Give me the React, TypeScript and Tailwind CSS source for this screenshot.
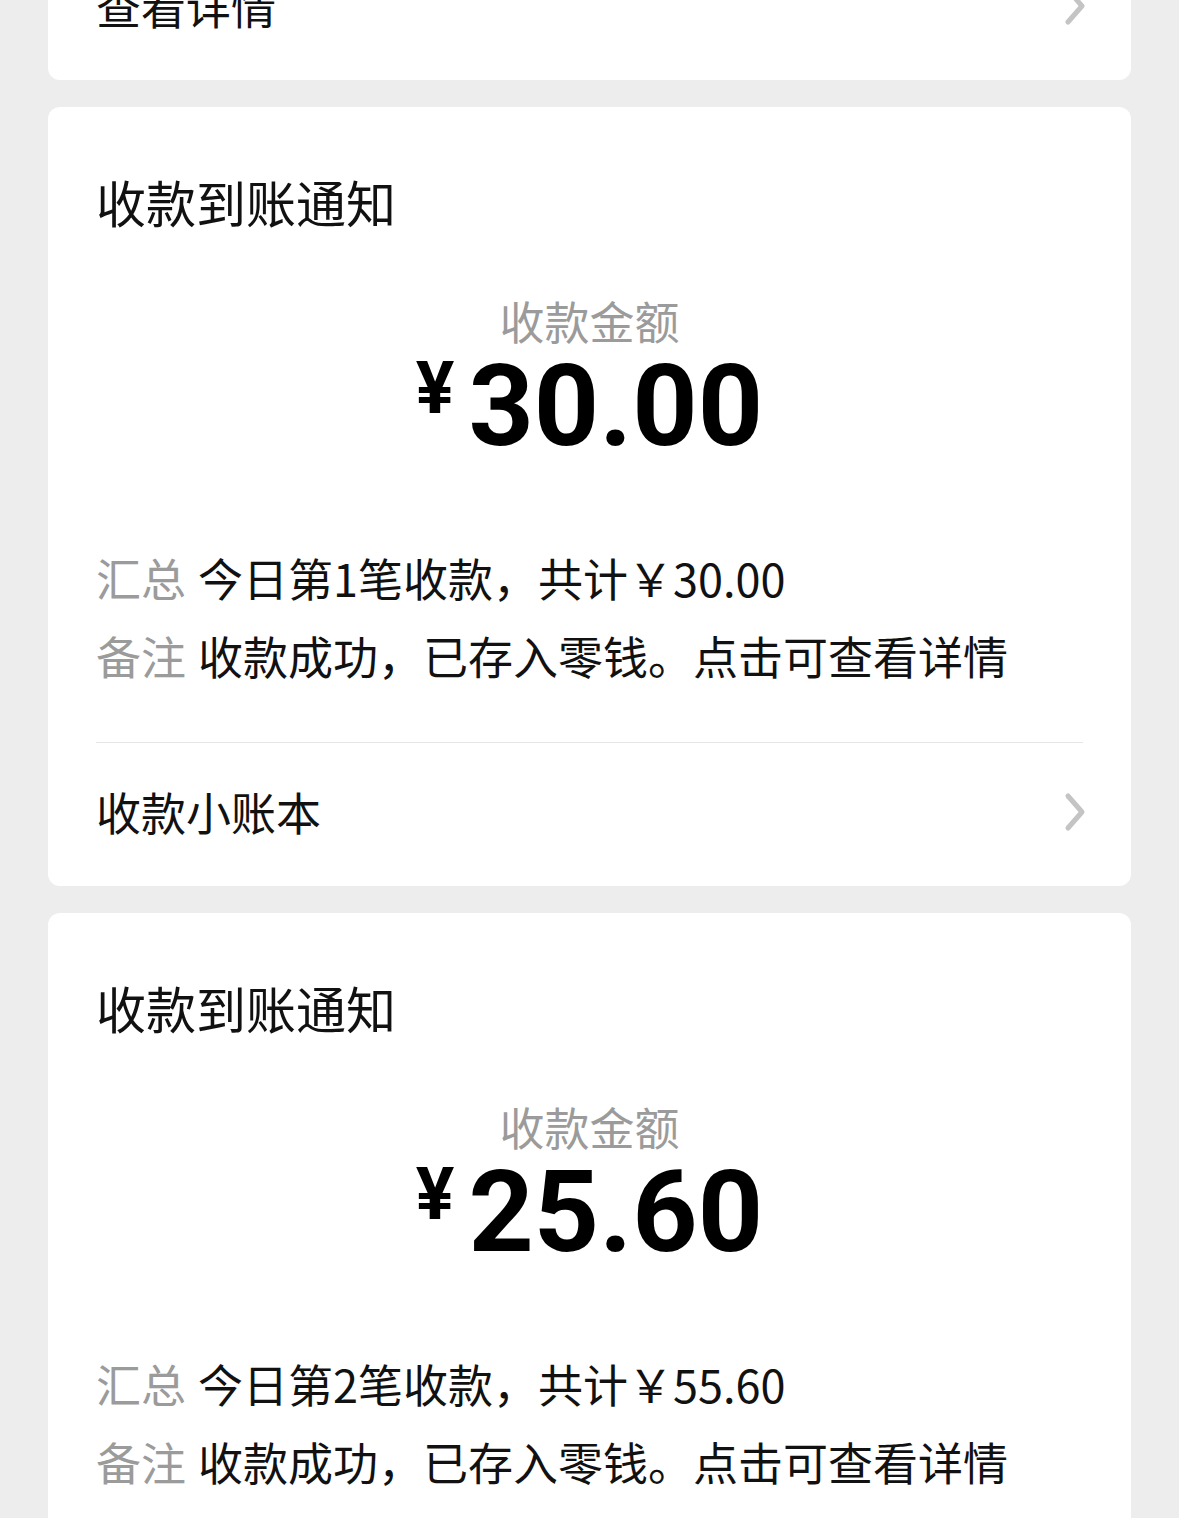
import React from "react";

const cjk = { fontFamily: '"Noto Sans CJK SC", "Noto Sans", sans-serif' };

function Chevron() {
  return (
    <svg width="24" height="40" viewBox="0 0 24 40" fill="none">
      <path d="M5 4 L19 20 L5 36" stroke="#c4c4c4" strokeWidth="5" strokeLinecap="round" strokeLinejoin="round" />
    </svg>
  );
}

function LinkRow({ label }: { label: string }) {
  return (
    <div className="flex items-center justify-between pt-[46px] pb-[52px]">
      <span className="text-[45px] leading-[45px] text-[#111]">{label}</span>
      <span className="mr-[-4px]">
        <Chevron />
      </span>
    </div>
  );
}

function Notice({ amount, index, total, withFooter }: { amount: string; index: number; total: string; withFooter: boolean }) {
  return (
    <div className="bg-white rounded-[12px] px-[48px] shrink-0">
      <div className="pt-[69px] text-[50px] leading-[50px] text-[#111]">收款到账通知</div>
      <div className="mt-[72px] text-center text-[45px] leading-[45px] text-[#9b9b9b]">收款金额</div>
      <div className="flex justify-center items-start mt-[6px]">
        <span
          className="text-[72px] leading-[72px] font-bold text-black mt-[4px] mr-[14px]"
          style={{ fontFamily: 'Roboto, "Noto Sans", sans-serif' }}
        >
          ¥
        </span>
        <span
          className="text-[114px] leading-[114px] font-bold text-black"
          style={{ fontFamily: 'Roboto, "Noto Sans", sans-serif' }}
        >
          {amount}
        </span>
      </div>
      <div className="mt-[92px] flex flex-col gap-[33px] text-[45px] leading-[45px]">
        <div className="flex">
          <span className="text-[#9b9b9b]">汇总</span>
          <span className="ml-[12px] text-[#111]">
            今日第{index}笔收款，共计￥{total}
          </span>
        </div>
        <div className="flex">
          <span className="text-[#9b9b9b]">备注</span>
          <span className="ml-[12px] text-[#111]">收款成功，已存入零钱。点击可查看详情</span>
        </div>
      </div>
      <div className="mt-[64px] h-px bg-[#e6e6e6]" />
      {withFooter && <LinkRow label="收款小账本" />}
    </div>
  );
}

export default function App() {
  return (
    <div className="w-[1179px] h-[1518px] overflow-hidden bg-[#ededed]" style={cjk}>
      <div className="pl-[48px] pr-[48px] flex flex-col gap-[27px]">
        <div className="bg-white rounded-[12px] px-[48px] mt-[-63px] shrink-0">
          <LinkRow label="查看详情" />
        </div>
        <Notice amount="30.00" index={1} total="30.00" withFooter />
        <Notice amount="25.60" index={2} total="55.60" withFooter />
      </div>
    </div>
  );
}
